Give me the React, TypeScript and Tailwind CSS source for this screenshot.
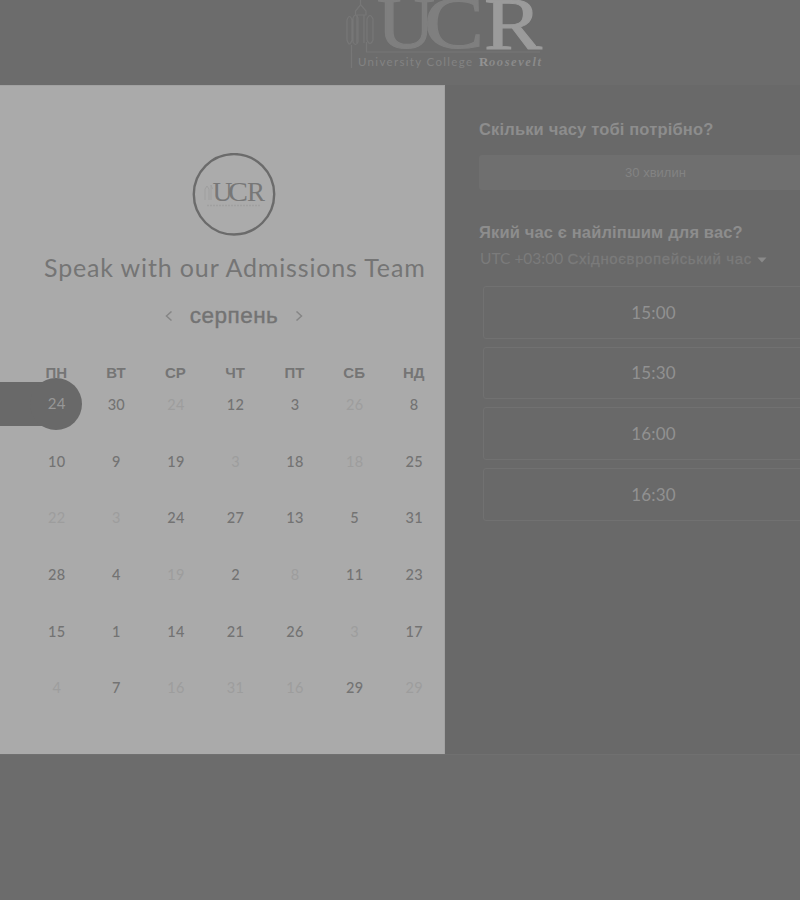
import React from "react";

const days = ["ПН", "ВТ", "СР", "ЧТ", "ПТ", "СБ", "НД"];

// Negative numbers are days that cannot be booked.
const weeks = [
  [24, 30, -24, 12, 3, -26, 8],
  [10, 9, 19, -3, 18, -18, 25],
  [-22, -3, 24, 27, 13, 5, 31],
  [28, 4, -19, 2, -8, 11, 23],
  [15, 1, 14, 21, 26, -3, 17],
  [-4, 7, -16, -31, -16, 29, -29],
];

const slots = ["15:00", "15:30", "16:00", "16:30"];

function CollegeLogo() {
  return (
    <svg width="210" height="85" viewBox="340 0 210 85" className="ml-[340px] block">
      <g fill="none" stroke="#777777" strokeWidth="1.2">
        <path d="M351.500 68V45M366.500 42V52H540" />
        <path d="M360.500 0V5L355.500 11V15H366V11L361 5M357 15V43M364 15V43" />
        <path d="M347 20Q349.500 13 352 20V40Q349.500 48 347 40ZM353 18Q355.500 12 358 18V42Q355.500 47 353 42ZM367 19Q370 12 373 19V40Q370 47 367 40Z" />
      </g>
      <g fontFamily="'Liberation Serif', serif" fontSize="75">
        <text x="377" y="48" fill="#7f7f7f" stroke="#7f7f7f" strokeWidth="1.200" textLength="58" lengthAdjust="spacingAndGlyphs">U</text>
        <text x="424" y="48" fill="#7f7f7f" stroke="#7f7f7f" strokeWidth="1.200" textLength="60" lengthAdjust="spacingAndGlyphs">C</text>
        <text x="484" y="48.500" fill="#9b9b9b" stroke="#9b9b9b" strokeWidth="1" textLength="58" lengthAdjust="spacingAndGlyphs">R</text>
      </g>
      <text x="358" y="66" fontFamily="Lato, sans-serif" fontSize="11.500" fill="#838383" textLength="114" lengthAdjust="spacing">University College</text>
      <text x="479" y="66" fontFamily="'Liberation Serif', serif" fontSize="13" fontWeight="700" fill="#939393">R</text>
      <text x="489" y="66" fontFamily="'Liberation Serif', serif" fontSize="12.500" fontStyle="italic" fontWeight="700" fill="#8a8a8a" textLength="52" lengthAdjust="spacing">oosevelt</text>
    </svg>
  );
}

function Avatar() {
  return (
    <svg width="84" height="84" viewBox="0 0 84 84" className="block shrink-0">
      <circle cx="42" cy="41.300" r="40.200" fill="#ababab" stroke="#6b6b6b" strokeWidth="2.400" />
      <path d="M13 47V36L15 33L17 36V47M19 47V32L20.500 36" fill="none" stroke="#9f9f9f" />
      <g fontFamily="'Liberation Serif', serif" fontSize="27" fill="#777777">
        <text x="20.500" y="47.500" textLength="20" lengthAdjust="spacingAndGlyphs">U</text>
        <text x="36" y="47.500" textLength="20" lengthAdjust="spacingAndGlyphs">C</text>
        <text x="55" y="47.500" textLength="18" lengthAdjust="spacingAndGlyphs">R</text>
      </g>
      <path d="M15 52.500H69" stroke="#a0a0a0" strokeWidth="1.500" strokeDasharray="2 1" />
    </svg>
  );
}

function Chevron({ d }: { d: string }) {
  return (
    <svg width="8" height="10" viewBox="0 0 8 10" fill="none" stroke="#868686" strokeWidth="1.500">
      <path d={d} />
    </svg>
  );
}

function Day({ value, selected }: { value: number; selected: boolean }) {
  if (selected) {
    return (
      <div className="relative flex h-[56.600px] items-center justify-center">
        <div className="absolute right-[30px] top-[5px] h-11 w-[57px] bg-[#696969]" />
        <div className="absolute left-[3px] top-px size-[52px] rounded-full bg-[#696969]" />
        <span className="relative -top-[2px] text-[15px] tracking-[0.300px] text-[#979797]">{value}</span>
      </div>
    );
  }
  return (
    <div
      className={
        value < 0
          ? "flex h-[56.600px] items-center justify-center text-[#9d9d9d]"
          : "flex h-[56.600px] items-center justify-center font-medium text-[#737373]"
      }
    >
      {Math.abs(value)}
    </div>
  );
}

function Calendar() {
  return (
    <section className="flex w-[445px] shrink-0 flex-col overflow-hidden border-r border-t border-[#a2a2a2] bg-[#aaaaaa] font-['Lato','Liberation_Sans',sans-serif]">
      <div className="ml-[192px] mt-[67px]">
        <Avatar />
      </div>
      <h1 className="ml-[44px] mt-[12px] h-9 whitespace-nowrap text-[25px] leading-9 tracking-[0.850px] text-[#757575]">
        Speak with our Admissions Team
      </h1>
      <div className="ml-[165px] mt-[13px] flex h-9 w-[138px] items-center justify-between">
        <Chevron d="M6.500 0.500L1.500 5L6.500 9.500" />
        <span className="font-['Liberation_Sans',sans-serif] text-[22.500px] tracking-[0.500px] text-[#737373] [-webkit-text-stroke:0.400px_#737373]">серпень</span>
        <Chevron d="M1.500 0.500L6.500 5L1.500 9.500" />
      </div>
      <div className="ml-[26.500px] mt-[29px] grid w-[417px] grid-cols-7 font-['Liberation_Sans',sans-serif] text-[15px] font-bold leading-5 text-[#757575]">
        {days.map((d) => (
          <div key={d} className="text-center">{d}</div>
        ))}
      </div>
      <div className="ml-[27px] mt-[-6px] grid w-[417px] grid-cols-7 text-[14.500px] leading-5 tracking-[0.300px]">
        {weeks.map((week, w) =>
          week.map((n, i) => <Day key={w * 7 + i} value={n} selected={w === 0 && i === 0} />),
        )}
      </div>
    </section>
  );
}

function TimePicker() {
  return (
    <section className="flex min-w-0 flex-1 flex-col overflow-hidden bg-[#696969] pl-[34px] font-['Liberation_Sans',sans-serif]">
      <h2 className="mt-[32px] whitespace-nowrap text-[16.500px] font-bold leading-6 tracking-[0.160px] text-[#8d8d8d]">
        Скільки часу тобі потрібно?
      </h2>
      <div className="mt-[14px] flex h-[35px] w-[353px] shrink-0 items-center justify-center rounded-[3px] bg-[#6f6f6f] text-[13px] text-[#838383]">
        30 хвилин
      </div>
      <h2 className="mt-[30px] whitespace-nowrap text-[16.500px] font-bold leading-6 tracking-[0.140px] text-[#8d8d8d]">
        Який час є найліпшим для вас?
      </h2>
      <div className="mt-[4px] flex h-[22px] items-center whitespace-nowrap text-[#7b7b7b]">
        <span className="w-[88.500px] pl-px font-['Lato',sans-serif] text-[15.500px]">UTC +03:00</span>
        <span className="text-[15px] tracking-[0.620px] [-webkit-text-stroke:0.300px_#7b7b7b]">Східноєвропейський час</span>
        <svg width="10" height="6" className="ml-[5px] mt-[2px] fill-[#8a8a8a]">
          <path d="M0.500 0.500H9.500L5 5.500Z" />
        </svg>
      </div>
      <div className="ml-[3.500px] mt-[16px] flex w-[342px] flex-col gap-[8px]">
        {slots.map((s) => (
          <button
            key={s}
            className="h-[52.700px] rounded-[3px] border border-[#717171] font-['Lato',sans-serif] text-[17px] tracking-[0.150px] text-[#919191]"
          >
            {s}
          </button>
        ))}
      </div>
    </section>
  );
}

export default function App() {
  return (
    <div className="flex h-[900px] w-[800px] flex-col overflow-hidden bg-[#6c6c6c]">
      <header className="h-[85px] shrink-0 overflow-hidden">
        <CollegeLogo />
      </header>
      <main className="flex h-[669px] shrink-0">
        <Calendar />
        <TimePicker />
      </main>
      <footer className="flex-1 border-t border-[#707070]" />
    </div>
  );
}
